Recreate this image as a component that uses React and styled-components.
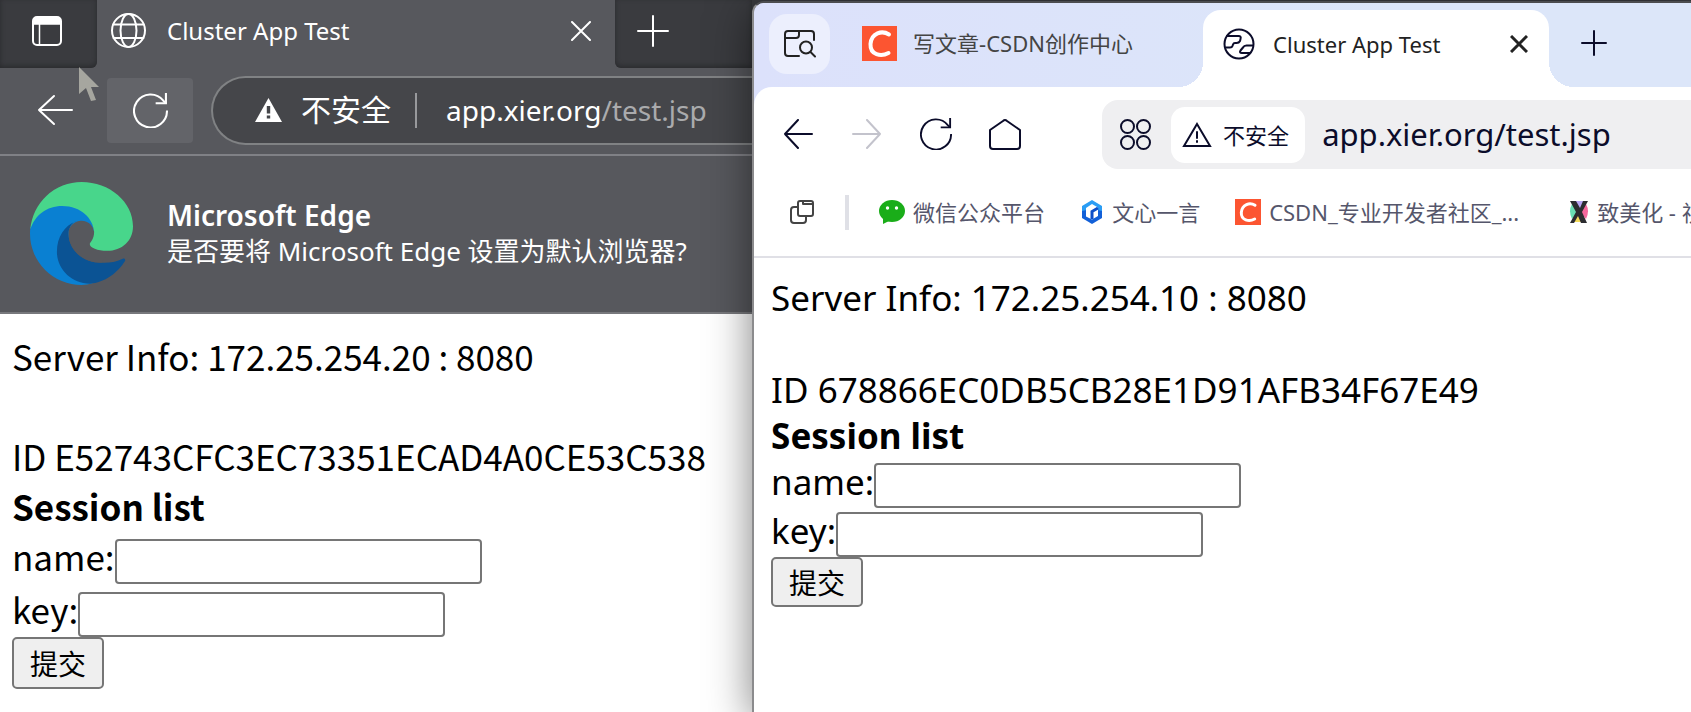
import React from 'react';
import styled, { createGlobalStyle } from 'styled-components';

const UI_FONT = '"Noto Sans", "Noto Sans CJK SC", sans-serif';
const CJK_FONT = '"Noto Sans CJK SC", sans-serif';

const GlobalStyle = createGlobalStyle`
  * {
    box-sizing: border-box;
  }
  body {
    margin: 0;
    background: #3a3b3f;
    font-family: ${UI_FONT};
    overflow: hidden;
  }
  button,
  input {
    margin: 0;
    font-family: inherit;
  }
  svg {
    display: block;
    flex: none;
  }
`;

const Desktop = styled.div`
  display: flex;
  min-height: 100vh;
`;

const IconButton = styled.button`
  display: flex;
  flex: none;
  align-items: center;
  justify-content: center;
  width: ${(p) => p.$width || 36}px;
  height: ${(p) => p.$height || 36}px;
  padding: 0;
  border: 0;
  border-radius: ${(p) => p.$radius || 4}px;
  background: ${(p) => p.$background || 'transparent'};
  color: ${(p) => p.$color || 'inherit'};
`;

/* Edge window */

const EdgeWindow = styled.section`
  display: flex;
  flex: 753 1 0;
  flex-direction: column;
  min-width: 0;
  overflow: hidden;
  background: #fff;
  color: #fff;
`;

const EdgeTabStrip = styled.header`
  display: flex;
  height: 68px;
  background: #57585d;
`;

const EdgeStripSide = styled.div`
  display: flex;
  flex: ${(p) => (p.$end ? '1' : '0 0 97px')};
  align-items: center;
  padding: 0 0 6px ${(p) => (p.$end ? 20 : 29)}px;
  border-radius: ${(p) => (p.$end ? '0 0 0 6px' : '0 0 6px 0')};
  background: #3a3b3f;
  box-shadow: inset 0 -2px 5px #2a2b2e;
`;

const EdgeTab = styled.div`
  display: flex;
  flex: 0 1 518px;
  align-items: center;
  gap: 21px;
  min-width: 0;
  padding: 0 16px 7px 14px;
`;

const TabTitle = styled.span`
  flex: 1;
  font-size: ${(p) => p.$size}px;
  line-height: 32px;
  white-space: nowrap;
`;

const EdgeToolbar = styled.div`
  display: flex;
  align-items: center;
  height: 88px;
  padding: 0 0 2px 31px;
  border-bottom: 2px solid #808186;
  background: #57585d;
`;

const ReloadButton = styled(IconButton)`
  margin: 0 18px 0 28px;
`;

const EdgeAddress = styled.div`
  display: flex;
  flex: 1;
  align-items: center;
  height: 69px;
  min-width: 0;
  padding-left: 42px;
  border: 2px solid #808284;
  border-right: 0;
  border-radius: 35px 0 0 35px;
  background: #45464a;
  white-space: nowrap;
`;

const EdgeWarning = styled.span`
  margin: 0 24px 0 19px;
  font-size: 30px;
  line-height: 40px;
`;

const EdgeUrl = styled.span`
  margin-left: 29px;
  font-size: 28px;
  line-height: 40px;
  color: #aaabad;

  b {
    font-weight: 400;
    color: #fff;
  }
`;

const Divider = styled.span`
  flex: none;
  width: ${(p) => p.$width}px;
  height: 35px;
  background: ${(p) => p.$color};
`;

const InfoBar = styled.aside`
  display: flex;
  align-items: center;
  gap: 34px;
  height: 158px;
  padding: 0 0 2px 30px;
  border-bottom: 2px solid #77787c;
  background: #57585d;
  white-space: nowrap;

  h2,
  p {
    margin: 0;
    font-size: 28px;
    line-height: 36px;
  }
  h2 {
    font-weight: 600;
  }
  p {
    font-size: 26px;
  }
`;

/* Foreground window */

const FrontWindow = styled.section`
  position: relative;
  display: flex;
  flex: 938 1 0;
  flex-direction: column;
  min-width: 0;
  margin-top: 1px;
  border-top: 2px solid #4c4d50;
  border-left: 2px solid #8b8b8d;
  border-radius: 12px 0 0 0;
  background: #dce1fb;
  box-shadow: 0 8px 44px rgba(0, 0, 0, 0.5);
  color: #0b0c2a;
`;

const FrontTabStrip = styled.header`
  display: flex;
  align-items: stretch;
  height: 84px;
  border-radius: 10px 0 0 0;
  background: linear-gradient(90deg, #dce1fb, #dce6f9 70%);
`;

const TabSearch = styled(IconButton)`
  margin: 11px 0 0 15px;
`;

const BackTab = styled.div`
  display: flex;
  flex: 0 0 373px;
  align-items: center;
  gap: 16px;
  padding: 0 0 4px 32px;
  color: #444;
`;

const FrontTab = styled.div`
  position: relative;
  display: flex;
  flex: 0 0 346px;
  align-items: center;
  gap: 18px;
  margin-top: 7px;
  padding: 0 12px 10px 20px;
  border-radius: 18px 18px 0 0;
  background: #fff;
  color: #222;

  &::before,
  &::after {
    content: '';
    position: absolute;
    bottom: 0;
    width: 25px;
    height: 25px;
  }
  &::before {
    right: 100%;
    background: radial-gradient(circle at 0 0, transparent 25px, #fff 25px);
  }
  &::after {
    left: 100%;
    background: radial-gradient(circle at 100% 0, transparent 25px, #fff 25px);
  }
`;

const NewTab = styled(IconButton)`
  margin: 22px 0 0 27px;
`;

const FrontToolbar = styled.div`
  display: flex;
  align-items: center;
  height: 95px;
  padding-left: 26px;
  border-radius: 18px 0 0 0;
  background: #fff;
`;

const NavGroup = styled.nav`
  display: flex;
  flex: 0 0 322px;
  gap: 33px;
  padding-bottom: 2px;
`;

const FrontAddress = styled.div`
  display: flex;
  flex: 1;
  align-items: center;
  height: 69px;
  min-width: 0;
  padding-left: 18px;
  border-radius: 16px 0 0 16px;
  background: #efeff1;
  white-space: nowrap;
`;

const SecurityChip = styled.button`
  display: flex;
  align-items: center;
  gap: 11px;
  height: 56px;
  margin: 0 17px 0 20px;
  padding: 0 16px 0 11px;
  border: 0;
  border-radius: 14px;
  background: #fff;
  color: #0b0c2a;
  font-size: 22px;
  line-height: 32px;
`;

const FrontUrl = styled.span`
  padding-bottom: 2px;
  font-size: 31px;
  line-height: 40px;
`;

const BookmarkBar = styled.nav`
  display: flex;
  align-items: center;
  height: 76px;
  padding: 0 0 14px 36px;
  overflow: hidden;
  border-bottom: 2px solid #e0e0e6;
  background: #fff;
  color: #55566b;
`;

const BookmarkDivider = styled(Divider)`
  margin: 0 30px 0 31px;
`;

const Bookmark = styled.a`
  display: flex;
  flex: none;
  align-items: center;
  gap: 8px;
  margin-right: ${(p) => p.$gap || 0}px;
  color: inherit;
  font-size: 22px;
  line-height: 32px;
  text-decoration: none;
  white-space: nowrap;
`;

/* The test page shown by both windows */

const Page = styled.main`
  flex: 1;
  padding: 17px ${(p) => p.$inset}px;
  background: #fff;
  color: #000;
  font-family: ${(p) => p.$font};
  font-size: 35px;
  line-height: ${(p) => p.$line}px;
  white-space: nowrap;
`;

const Line = styled.p`
  min-height: ${(p) => p.$line}px;
  margin: 0;
  font-weight: ${(p) => (p.$bold ? 700 : 400)};
`;

const Field = styled.div`
  display: flex;
  align-items: baseline;

  input {
    width: 367px;
    height: 45px;
    padding: 0 4px 4px;
    border: 2px solid #767676;
    border-radius: 4px;
    background: #fff;
    font-family: ${CJK_FONT};
    font-size: 27px;
  }
`;

const Submit = styled.button`
  display: block;
  height: ${(p) => p.$height}px;
  padding: 0 16px;
  border: 2px solid #767676;
  border-radius: 5px;
  background: #efefef;
  color: #000;
  font-family: ${CJK_FONT};
  font-size: 28px;
  line-height: 40px;
`;

const Cursor = styled.svg`
  position: absolute;
  top: 67px;
  left: 79px;
`;

function TestPage({ id, server, session, buttonHeight, ...look }) {
  return (
    <Page {...look}>
      <Line $line={look.$line}>Server Info: {server} : 8080</Line>
      <Line $line={look.$line} />
      <Line $line={look.$line}>ID {session}</Line>
      <Line $line={look.$line} $bold>Session list</Line>
      <form onSubmit={(e) => e.preventDefault()}>
        {['name', 'key'].map((name) => (
          <Field key={name}>
            <label htmlFor={`${id}-${name}`}>{name}:</label>
            <input id={`${id}-${name}`} name={name} type="text" />
          </Field>
        ))}
        <Submit type="submit" $height={buttonHeight}>提交</Submit>
      </form>
    </Page>
  );
}

function Stroke({ w, h, box, width = 2, children, ...rest }) {
  return (
    <svg
      width={w}
      height={h}
      viewBox={box || `0 0 ${w} ${h}`}
      fill="none"
      stroke="currentColor"
      strokeWidth={width}
      strokeLinecap="round"
      strokeLinejoin="round"
      aria-hidden="true"
      {...rest}
    >
      {children}
    </svg>
  );
}

function EdgeLogo() {
  return (
    <svg width="103" height="103" viewBox="0 0 310 310" aria-hidden="true">
      <path
        fill="#0a80d2"
        d="M0 155C0 105 45 68 100 68C152 68 190 100 193 150L152 117L118 150L110 240L190 304Q172 310 155 310A155 155 0 0 1 0 155Z"
      />
      <path
        fill="#0b5394"
        d="M140 118C104 130 81 165 81 210C81 262 125 306 180 306C225 304 265 272 286 238C288 233 284 229 279 231C255 242 238 244 215 243C160 243 116 205 116 155C116 140 126 120 140 118Z"
      />
      <path
        fill="#57585d"
        d="M155 117C133 117 116 134 116 155C116 205 160 243 215 243L240 206L180 190C188 180 193 170 193 152C191 132 176 117 155 117Z"
      />
      <path
        fill="#48d68b"
        d="M1 143A155 155 0 0 1 155 0C240 0 310 60 310 133C310 177 277 207 232 207C203 207 180 197 180 187C180 182 193 174 193 150C190 110 154 72 97 72C50 72 14 100 1 143Z"
      />
    </svg>
  );
}

function CsdnLogo({ size }) {
  return (
    <svg width={size} height={size} viewBox="0 0 35 35" aria-hidden="true">
      <path fill="#fc5531" d="M0 0H35V35H0Z" />
      <path
        d="M27 8.500C20 4 9.500 7 8.500 18C8 29 19 31 26.500 27"
        fill="none"
        stroke="#fff"
        strokeWidth="4"
        strokeLinecap="round"
      />
    </svg>
  );
}

function ReloadIcon({ w, children }) {
  return (
    <Stroke w={w} h={w} box="0 0 34 34" strokeLinecap="butt" strokeLinejoin="miter">
      {children}
      <path d="M33 17A16 16 0 1 1 29.500 7.500L32 10" />
      <path d="M32 0V10H22" />
    </Stroke>
  );
}

function Edge() {
  return (
    <EdgeWindow>
      <EdgeTabStrip>
        <EdgeStripSide>
          <IconButton type="button" aria-label="Tab actions">
            <Stroke w={32} h={32}>
              <rect x="2" y="2" width="28" height="28" rx="4" />
              <path d="M8.500 9V30M2 9H30" strokeWidth="1.500" />
              <path d="M2 9V6Q2 2 6 2H26Q30 2 30 6V9Z" fill="currentColor" stroke="none" />
            </Stroke>
          </IconButton>
        </EdgeStripSide>
        <EdgeTab>
          <Stroke w={35} h={35}>
            <circle cx="17.500" cy="17.500" r="16.500" />
            <ellipse cx="17.500" cy="17.500" rx="8" ry="16.500" />
            <path d="M2.500 11.500H32.500M2.500 25H32.500" />
          </Stroke>
          <TabTitle $size={24}>Cluster App Test</TabTitle>
          <IconButton type="button" aria-label="Close tab">
            <Stroke w={20} h={20}>
              <path d="M1 1L19 19M19 1L1 19" />
            </Stroke>
          </IconButton>
        </EdgeTab>
        <EdgeStripSide $end>
          <IconButton type="button" aria-label="New tab">
            <Stroke w={32} h={32}>
              <path d="M16 1V31M1 16H31" />
            </Stroke>
          </IconButton>
        </EdgeStripSide>
      </EdgeTabStrip>
      <EdgeToolbar>
        <IconButton type="button" aria-label="Back" $width={48}>
          <Stroke w={36} h={32}>
            <path d="M17 2L2 16L17 30M2 16H35" />
          </Stroke>
        </IconButton>
        <ReloadButton type="button" aria-label="Reload" $width={86} $height={65} $background="#636469">
          <ReloadIcon w={35} />
        </ReloadButton>
        <EdgeAddress>
          <svg width="27" height="24" viewBox="0 0 27 24" aria-hidden="true">
            <path fill="#fff" d="M13.500 0L27 24H0Z" />
            <path fill="#45464a" d="M11.800 8H15.200V15.500H11.800ZM11.800 17.500H15.200V20.500H11.800Z" />
          </svg>
          <EdgeWarning>不安全</EdgeWarning>
          <Divider $width={2} $color="#98999c" />
          <EdgeUrl>
            <b>app.xier.org</b>/test.jsp
          </EdgeUrl>
        </EdgeAddress>
      </EdgeToolbar>
      <InfoBar>
        <EdgeLogo />
        <div>
          <h2>Microsoft Edge</h2>
          <p>是否要将 Microsoft Edge 设置为默认浏览器?</p>
        </div>
      </InfoBar>
      <TestPage
        id="edge"
        server="172.25.254.20"
        session="E52743CFC3EC73351ECAD4A0CE53C538"
        buttonHeight={52}
        $inset={12}
        $font={CJK_FONT}
        $line={50}
      />
    </EdgeWindow>
  );
}

function Front() {
  return (
    <FrontWindow>
      <FrontTabStrip>
        <TabSearch
          type="button"
          aria-label="Search tabs"
          $width={61}
          $height={60}
          $radius={18}
          $background="#eceffd"
          $color="#222"
        >
          <Stroke w={32} h={28}>
            <path d="M15 26H4Q1 26 1 23V4Q1 1 4 1H27Q30 1 30 4V10" />
            <path d="M1 8H12Q15 8 15 5V1" />
            <circle cx="22" cy="17.500" r="6" />
            <path d="M26.500 22L31 26.500" />
          </Stroke>
        </TabSearch>
        <BackTab>
          <CsdnLogo size={35} />
          <TabTitle $size={22}>写文章-CSDN创作中心</TabTitle>
        </BackTab>
        <FrontTab>
          <Stroke w={32} h={32} color="#0b0c2a">
            <circle cx="16" cy="16" r="14.500" />
            <path d="M4 8H15.500Q18.500 8 17.500 11L17 13Q16 15 13.500 15H12Q10.500 15 10 16.500L9.500 18Q9 19.500 7 19.500H2.500" />
            <path d="M30 17.500H23.500Q21 17.500 20 19.500L17.500 22.500Q16 25 19 25H27" />
          </Stroke>
          <TabTitle $size={22}>Cluster App Test</TabTitle>
          <IconButton type="button" aria-label="Close tab">
            <Stroke w={18} h={18} width={3} strokeLinecap="butt">
              <path d="M1 1L17 17M17 1L1 17" />
            </Stroke>
          </IconButton>
        </FrontTab>
        <NewTab type="button" aria-label="New tab" $color="#0b0c2a">
          <Stroke w={26} h={26}>
            <path d="M13 1V25M1 13H25" />
          </Stroke>
        </NewTab>
      </FrontTabStrip>
      <FrontToolbar>
        <NavGroup>
          <IconButton type="button" aria-label="Back">
            <Stroke w={30} h={30}>
              <path d="M15 1L2 15L15 29M2 15H29" />
            </Stroke>
          </IconButton>
          <IconButton type="button" aria-label="Forward" disabled $color="#c3c3cc">
            <Stroke w={30} h={30}>
              <path d="M15 1L28 15L15 29M28 15H1" />
            </Stroke>
          </IconButton>
          <IconButton type="button" aria-label="Reload">
            <ReloadIcon w={32} />
          </IconButton>
          <IconButton type="button" aria-label="Home">
            <Stroke w={32} h={32}>
              <path d="M1 12L14 3Q16 1 18 3L31 12V28Q31 31 28 31H4Q1 31 1 28Z" />
            </Stroke>
          </IconButton>
        </NavGroup>
        <FrontAddress>
          <Stroke w={31} h={31}>
            <circle cx="7.500" cy="7.500" r="6.500" />
            <circle cx="23.500" cy="7.500" r="6.500" />
            <circle cx="7.500" cy="23.500" r="6.500" />
            <circle cx="23.500" cy="23.500" r="6.500" />
          </Stroke>
          <SecurityChip type="button">
            <Stroke w={30} h={27} strokeLinejoin="miter">
              <path d="M15 3L28 25H2Z" />
              <path d="M15 11V17M15 20V21" />
            </Stroke>
            不安全
          </SecurityChip>
          <FrontUrl>app.xier.org/test.jsp</FrontUrl>
        </FrontAddress>
      </FrontToolbar>
      <BookmarkBar>
        <Stroke w={24} h={24} color="#444">
          <rect x="8" y="1" width="15" height="15" rx="2" />
          <path d="M8 7H4Q1 7 1 10V20Q1 23 4 23H13Q16 23 16 20V16M13 1V4H22" />
        </Stroke>
        <BookmarkDivider $width={4} $color="#dfe0e6" />
        <Bookmark href="#weixin" $gap={35}>
          <svg width="26" height="24" viewBox="0 0 26 24" aria-hidden="true">
            <ellipse cx="13" cy="11" rx="13" ry="11" fill="#1aad19" />
            <path d="M4 17L4 24L12 20Z" fill="#1aad19" />
            <circle cx="8.500" cy="8" r="1.700" fill="#fff" />
            <circle cx="17.500" cy="8" r="1.700" fill="#fff" />
          </svg>
          微信公众平台
        </Bookmark>
        <Bookmark href="#yiyan" $gap={35}>
          <svg width="24" height="24" viewBox="0 0 24 24" aria-hidden="true">
            <path d="M12 0L22 6V12L12 10L2 12V6Z" fill="#2a9df4" />
            <path d="M2 11L12 9L22 11V18L12 24L2 18Z" fill="#1260d8" />
            <path d="M12 4L18 7.500V16L12 19.500L6 16.500V8Z" fill="#fff" />
            <path d="M12 19V11.500L18 8" fill="none" stroke="#0d4fc8" strokeWidth="3" />
          </svg>
          文心一言
        </Bookmark>
        <Bookmark href="#csdn" $gap={50}>
          <CsdnLogo size={26} />
          CSDN_专业开发者社区_...
        </Bookmark>
        <Bookmark href="#zhimeihua">
          <svg width="20" height="24" viewBox="0 0 20 24" aria-hidden="true">
            <path d="M10 11L5 1H15Z" fill="#b9a6f5" />
            <path d="M10 11L17 4Q21 11 17 19Z" fill="#f4679c" />
            <path d="M10 11L3 4Q-1 11 3 19Z" fill="#6adfb4" />
            <path d="M10 11L5 22H15Z" fill="#f3da5a" />
            <path d="M1 1H7L11 8L14 1H19L13 12L18 23H12L9 16L5 23H1L7 12Z" fill="#2c2c30" />
          </svg>
          致美化 - 视
        </Bookmark>
      </BookmarkBar>
      <TestPage
        id="front"
        server="172.25.254.10"
        session="678866EC0DB5CB28E1D91AFB34F67E49"
        buttonHeight={50}
        $inset={17}
        $font={UI_FONT}
        $line={46}
      />
    </FrontWindow>
  );
}

export default function App() {
  return (
    <>
      <GlobalStyle />
      <Desktop>
        <Edge />
        <Front />
      </Desktop>
      <Cursor width="21" height="35" viewBox="0 0 21 35" aria-hidden="true">
        <path d="M0 0L20 20H12L17 33L12 34L7 21L0 27Z" fill="#a6a69f" />
      </Cursor>
    </>
  );
}
